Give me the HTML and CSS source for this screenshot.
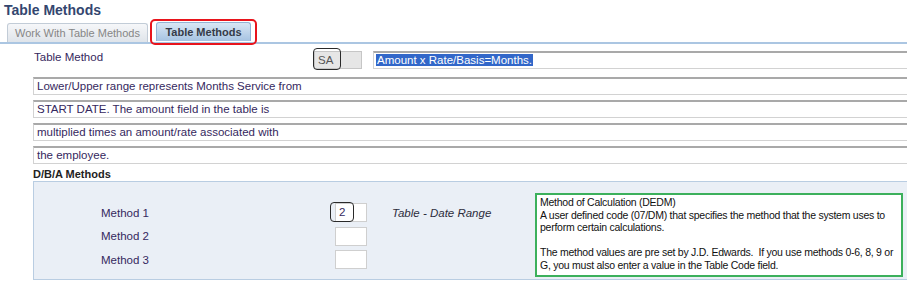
FILE: index.html
```html
<!DOCTYPE html>
<html>
<head>
<meta charset="utf-8">
<link rel="stylesheet" href="styles.css">
</head>
<body>
<div class="page">
  <div class="title">Table Methods</div>
  <div class="tabs">
    <div class="tab tab-off">Work With Table Methods</div>
    <div class="tab-hl"><div class="tab tab-on">Table Methods</div></div>
  </div>
  <div class="form">
    <div class="row-top">
      <div class="lbl-top">Table Method</div>
      <div class="code-wrap">
        <div class="inp code">SA</div>
        <div class="ring ring-sa"></div>
      </div>
      <div class="inp desc"><span class="sel">Amount x Rate/Basis=Months.</span></div>
    </div>
    <div class="inp line">Lower/Upper range represents Months Service from</div>
    <div class="inp line">START DATE. The amount field in the table is</div>
    <div class="inp line">multiplied times an amount/rate associated with</div>
    <div class="inp line">the employee.</div>
    <div class="section">D/B/A Methods</div>
    <div class="panel">
      <div class="methods">
        <div class="mrow">
          <div class="mlbl">Method 1</div>
          <div class="m-wrap">
            <div class="inp minp">2</div>
            <div class="ring ring-m"></div>
          </div>
          <div class="mdesc">Table - Date Range</div>
        </div>
        <div class="mrow">
          <div class="mlbl">Method 2</div>
          <div class="m-wrap"><div class="inp minp"></div></div>
          <div class="mdesc"></div>
        </div>
        <div class="mrow">
          <div class="mlbl">Method 3</div>
          <div class="m-wrap"><div class="inp minp"></div></div>
          <div class="mdesc"></div>
        </div>
      </div>
      <div class="help">
        Method of Calculation (DEDM)<br>
        A user defined code (07/DM) that specifies the method that the system uses to perform certain calculations.<br>
        <br>
        The method values are pre set by J.D. Edwards.&nbsp; If you use methods 0-6, 8, 9 or G, you must also enter a value in the Table Code field.
      </div>
    </div>
  </div>
</div>
</body>
</html>
```
FILE: styles.css
```css
html, body {
  margin: 0;
  padding: 0;
  background: #ffffff;
  overflow: hidden;
}
.page {
  width: 907px;
  height: 281px;
  overflow: hidden;
  font-family: "Liberation Sans", Arial, sans-serif;
  color: #35285e;
}
.title {
  font-size: 14px;
  font-weight: bold;
  color: #33466f;
  padding: 2px 0 0 4px;
  height: 19px;
  line-height: 16px;
}
.tabs {
  display: flex;
  align-items: flex-end;
  height: 21px;
  padding-left: 7px;
  border-bottom: 2px solid #abc6e2;
}
.tab {
  height: 19px;
  line-height: 19px;
  box-sizing: border-box;
  border-radius: 3px 3px 0 0;
}
.tab-off {
  width: 141px;
  padding-left: 7px;
  font-size: 11px;
  color: #868686;
  background: linear-gradient(#f6f7f9, #dfe4ea);
  border: 1px solid #c2ccd7;
  border-bottom: none;
  white-space: nowrap;
  overflow: hidden;
}
.tab-hl {
  margin-left: 2px;
  padding: 1px 4px 2px 4px;
  border: 2px solid #e8141c;
  border-radius: 5px;
  margin-bottom: -3px;
  position: relative;
}
.tab-on {
  width: 95px;
  text-align: center;
  font-size: 11px;
  font-weight: bold;
  color: #353b48;
  background: linear-gradient(#d8e6f4, #a6c3e2);
  border: 1px solid #93b2d4;
  border-bottom: none;
}
.form {
  padding-left: 33px;
}
.row-top {
  display: flex;
  align-items: center;
  height: 34px;
  margin-top: -1px;
}
.lbl-top {
  width: 280px;
  font-size: 11.5px;
  padding-left: 1px;
  margin-top: -7px;
}
.inp {
  box-sizing: border-box;
  background: #ffffff;
  border: 1px solid #d2d2d2;
  border-top: 2px solid #a9a9a9;
  font-size: 11.5px;
  line-height: 15px;
  color: #35285e;
  white-space: nowrap;
  overflow: hidden;
}
.code-wrap {
  position: relative;
  width: 48px;
}
.code {
  width: 48px;
  height: 18px;
  background: #e6e6e6;
  border: 1px solid #c6c6c6;
  padding-left: 3px;
  color: #555555;
  line-height: 16px;
}
.ring {
  position: absolute;
  border: 1.5px solid #2a2a2a;
  border-radius: 4px;
}
.ring-sa {
  left: -1px;
  top: -3px;
  width: 26px;
  height: 20px;
}
.desc {
  margin-left: 11px;
  flex: 1;
  height: 18px;
  padding-left: 2px;
  margin-right: -20px;
}
.sel {
  background: #3267c9;
  color: #ffffff;
  padding: 0 1px;
}
.line {
  width: 900px;
  height: 18px;
  margin-top: 5px;
  padding-left: 3px;
}
.row-top + .line {
  margin-top: 0;
}
.section {
  font-size: 11px;
  font-weight: bold;
  color: #222222;
  margin-top: 3px;
  height: 14px;
  line-height: 14px;
}
.panel {
  display: flex;
  width: 900px;
  height: 99px;
  box-sizing: border-box;
  background: #eaeff6;
  border: 1px solid #b9cde2;
  border-right: none;
}
.methods {
  width: 501px;
  padding: 19px 0 0 67px;
  box-sizing: border-box;
}
.mrow {
  display: grid;
  grid-template-columns: 234px 32px auto;
  align-items: center;
  height: 23.5px;
}
.mlbl {
  font-size: 11.5px;
}
.m-wrap {
  position: relative;
  height: 19px;
}
.minp {
  width: 32px;
  height: 19px;
  padding-left: 3px;
  border: 1px solid #cfcfcf;
  line-height: 17px;
}
.ring-m {
  left: -5px;
  top: -1px;
  width: 22px;
  height: 18px;
}
.mdesc {
  font-size: 11.5px;
  font-style: italic;
  padding-left: 25px;
  color: #2d2d3d;
}
.help {
  margin-top: 11px;
  width: 368px;
  height: 84px;
  box-sizing: border-box;
  border: 2px solid #3cb05c;
  background: #ffffff;
  padding: 1px 2px 1px 3px;
  font-family: "Liberation Sans", Arial, sans-serif;
  font-size: 10.5px;
  line-height: 12.5px;
  color: #111111;
  letter-spacing: -0.25px;
}
```
